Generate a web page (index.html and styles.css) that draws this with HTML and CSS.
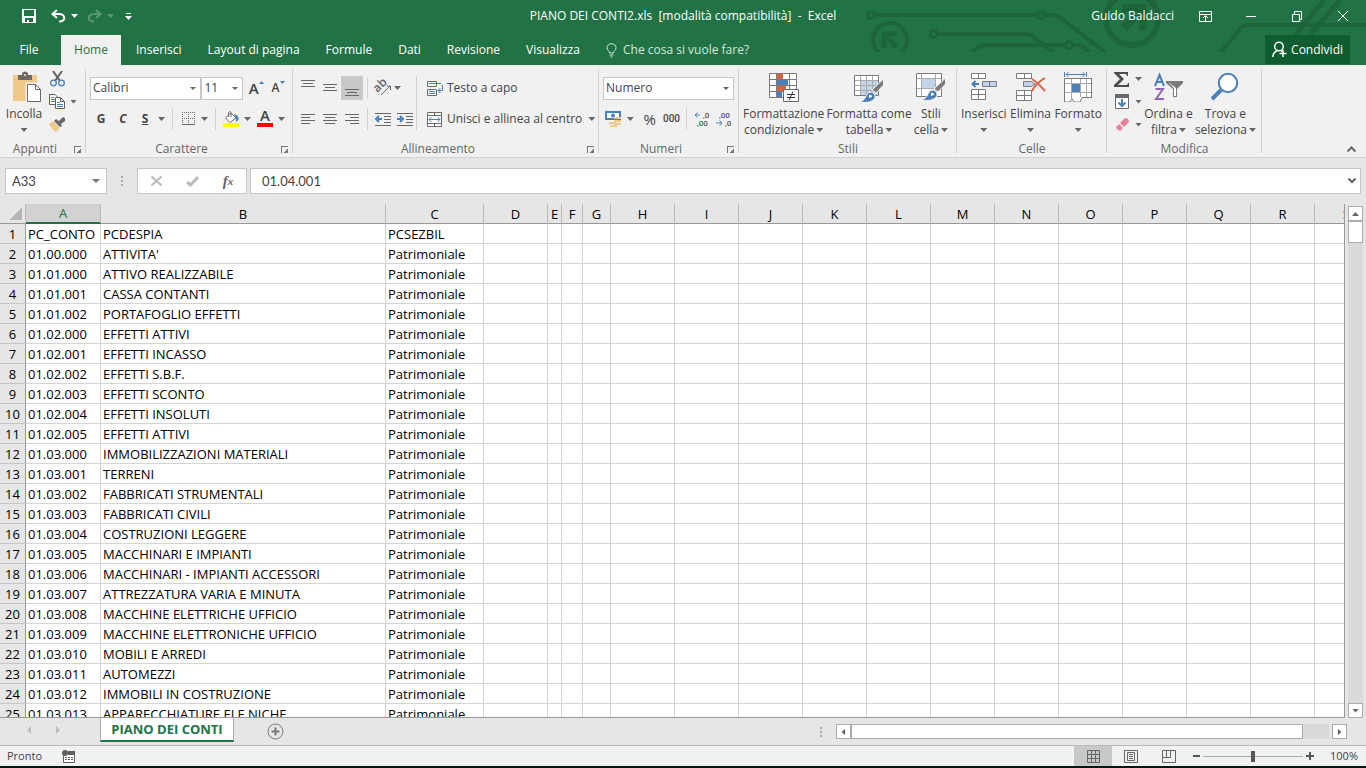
FILE: index.html
```
<!DOCTYPE html>
<html lang="it">
<head>
    <meta charset="UTF-8">
    <meta name="viewport" content="width=device-width, initial-scale=1.0">
    <title>PIANO DEI CONTI2.xls - Excel</title>
    <link rel="stylesheet" href="styles.css">
</head>
<body>
    <header class="header">
        <svg class="circuit" width="501" height="52" viewBox="0 0 501 52" fill="none" stroke="#1d643b" stroke-width="4">
            <circle cx="6" cy="15" r="3.5" stroke-width="3"/>
            <path d="M10 15H172M181 15H187Q192 15 196 18L241 53"/>
            <circle cx="176" cy="15" r="3.5" stroke-width="3"/>
            <circle cx="25" cy="40" r="17"/>
            <path d="M19 48V34H32M20 35L32 47" stroke-width="5"/>
            <circle cx="69" cy="34" r="3.5" stroke-width="3"/>
            <path d="M73 34H161Q164 34 167 36L189 53"/>
            <path d="M106 53L114 47Q117 45 121 45H200M208 45H212Q216 45 219 48L225 53"/>
            <circle cx="204" cy="45" r="3.5" stroke-width="3"/>
            <circle cx="267" cy="19" r="26" stroke-width="6"/>
            <path d="M257 8H278V30M277 9L259 28" stroke-width="8"/>
            <path d="M355 53L375 29Q378 25 383 25H501"/>
            <path d="M430 35L459 0M445 35L475 0" stroke-width="5"/>
        </svg>
        <div class="titlebar">
            <div class="quick">
                <button aria-label="Salva"><svg width="14" height="14" viewBox="0 0 14 14"><path fill="#fff" fill-rule="evenodd" d="M0 0H14V14H0ZM2 1V7H12V1ZM3 9V13H5V11H7V13H11V9Z"/></svg></button>
                <button aria-label="Annulla"><svg width="15" height="14" viewBox="0 0 15 14" fill="none" stroke="#fff" stroke-width="2"><path d="M6 1L1.500 5L6 9M2 5H8C15 5 15 13 8 12.500"/></svg></button>
                <i class="caret light"></i>
                <button class="dim redo" aria-label="Ripristina"><svg width="15" height="14" viewBox="0 0 15 14" fill="none" stroke="#fff" stroke-width="2"><path d="M9 1L13.500 5L9 9M13 5H7C0 5 0 13 7 12.500"/></svg></button>
                <i class="caret light dim"></i>
                <button class="customize" aria-label="Personalizza"><svg width="7" height="8" viewBox="0 0 7 8" fill="#fff"><path d="M1 1H6V2H1ZM0 4H7L3.500 8Z"/></svg></button>
            </div>
            <div class="title">PIANO DEI CONTI2.xls&nbsp; [modalità compatibilità]&nbsp; -&nbsp; Excel</div>
            <div class="window-buttons">
                <span class="user">Guido Baldacci</span>
                <button aria-label="Opzioni barra multifunzione"><svg width="13" height="11" viewBox="0 0 13 11" fill="none" stroke="#fff"><path d="M.5 .5H12.500V10.500H.5ZM.5 3.500H12.500M6.500 10V5M4 7L6.500 4.500L9 7"/></svg></button>
                <button aria-label="Riduci a icona"><svg width="10" height="11" viewBox="0 0 10 11" stroke="#fff"><path d="M0 5.500H10"/></svg></button>
                <button aria-label="Ripristina giù"><svg width="10" height="11" viewBox="0 0 10 11" fill="none" stroke="#fff"><path d="M.5 3.500H7.500V10.500H.5ZM2.500 3V.5H9.500V8.500H8"/></svg></button>
                <button aria-label="Chiudi"><svg width="10" height="10" viewBox="0 0 10 10" stroke="#fff"><path d="M0 0L10 10M10 0L0 10"/></svg></button>
            </div>
        </div>
        <nav class="tabs">
            <button class="file">File</button>
            <button class="active">Home</button>
            <button>Inserisci</button>
            <button>Layout di pagina</button>
            <button>Formule</button>
            <button>Dati</button>
            <button>Revisione</button>
            <button>Visualizza</button>
            <button class="tell"><svg width="11" height="15" viewBox="0 0 11 15" fill="none" stroke="#d5e5dc"><path d="M3.500 10C3.500 8 1 7 1 4.700A4.500 4 0 0 1 10 4.700C10 7 7.500 8 7.500 10ZM3.500 12H7.500M4.500 14H6.500"/></svg>Che cosa si vuole fare?</button>
            <button class="share"><svg width="15" height="17" viewBox="0 0 15 17" fill="none" stroke="#fff" stroke-width="1.500"><circle cx="7" cy="5.500" r="4.300"/><path d="M.8 16C1 12 3 10.500 5.500 9.500M8.500 9.500L10 10.500M11 9V16M7.500 12.500H14.500"/></svg>Condividi</button>
        </nav>
    </header>

    <div class="ribbon">
        <section class="group clipboard">
            <div class="group-body">
                <button class="big">
                    <svg width="34" height="32" viewBox="-6 0 34 32"><path fill="#efc987" d="M0 5H24V31H0Z"/><path fill="#6a6a6a" d="M5 5H9V3Q12 0 15 3V5H19V10H5Z"/><path fill="#efc987" d="M11 4H13V6H11Z"/><path fill="#fff" stroke="#f1f1f1" stroke-width="3" d="M14 14H23L28 19V32H14Z"/><path fill="#fff" stroke="#6a6a6a" d="M14.500 14.500H22.500L27.500 19.500V31.500H14.500ZM22.500 14.500V19.500H27.500"/></svg>
                    <span>Incolla</span><i class="caret"></i>
                </button>
                <div class="stack">
                    <div><button aria-label="Taglia"><svg width="15" height="16" viewBox="0 0 15 16" fill="none"><path stroke="#5f5f5f" stroke-width="2" d="M3 0L10 10M12 0L5 10"/><circle cx="3.500" cy="12" r="2.800" stroke="#4a80b8" stroke-width="1.300"/><circle cx="11.500" cy="12" r="2.800" stroke="#4a80b8" stroke-width="1.300"/></svg></button></div>
                    <div><button aria-label="Copia"><svg width="16" height="15" viewBox="0 0 16 15" fill="#fff" stroke="#5f5f5f"><path d="M.5 .5H6L8.500 3V10.500H.5Z"/><path stroke="#4a80b8" d="M2 3.500H5M2 5.500H6M2 7.500H6"/><path d="M6.500 3.500H11.500L15.500 7.500V14.500H6.500ZM11.500 3.500V7.500H15"/><path stroke="#4a80b8" d="M8 8.500H11M8 10.500H14M8 12.500H14"/></svg></button><i class="caret"></i></div>
                    <div><button aria-label="Copia formato"><svg width="17" height="15" viewBox="0 0 17 15"><path fill="#efc987" d="M0 7L4 4L11 11L7 15Q3 13 0 7Z"/><path fill="#6a6a6a" d="M5 4L7 2L10 4L14 0L16 1L16 4L12 7L13 9L11 10Z"/></svg></button></div>
                </div>
            </div>
            <div class="label">Appunti<button class="launch" aria-label="Appunti"></button></div>
        </section>

        <section class="group font">
            <div class="group-body rows">
                <div class="row">
                    <select class="combo face" aria-label="Tipo di carattere"><option>Calibri</option></select>
                    <select class="combo size" aria-label="Dimensione"><option>11</option></select>
                    <button class="w22 grow" aria-label="Aumenta dimensione">A<svg width="5" height="3" viewBox="0 0 5 3"><path fill="#4a80b8" d="M0 3L2.500 0L5 3Z"/></svg></button>
                    <button class="w22 grow less" aria-label="Riduci dimensione">A<svg width="5" height="3" viewBox="0 0 5 3"><path fill="#4a80b8" d="M0 0L2.500 3L5 0Z"/></svg></button>
                </div>
                <div class="row">
                    <button class="w22 style">G</button>
                    <button class="w22 style italic">C</button>
                    <button class="w22 style underline">S</button>
                    <i class="caret"></i>
                    <span class="sep"></span>
                    <button class="w22" aria-label="Bordi"><svg width="13" height="14" viewBox="0 0 13 14" fill="none" stroke="#6a6a6a"><path stroke-dasharray="1 1" d="M0 .5H13M.5 0V12M12.500 0V12M6.500 0V12M0 6.500H13"/><path d="M0 12.500H13"/></svg></button>
                    <i class="caret"></i>
                    <span class="sep"></span>
                    <button class="w22" aria-label="Colore riempimento"><svg width="16" height="16" viewBox="0 0 16 16"><path fill="#fff" stroke="#6a6a6a" d="M2.500 7L8 2L13 7L7 11.500Z"/><path fill="none" stroke="#6a6a6a" d="M5.500 6V1.500Q6.500 -.5 8 1.500V6"/><path fill="#4a80b8" d="M11 3Q16 4 15.500 9L13 11V7Z"/><path fill="#ff0" d="M0 12H16V16H0Z"/></svg></button>
                    <i class="caret"></i>
                    <button class="w22 color" aria-label="Colore carattere">A</button>
                    <i class="caret"></i>
                </div>
            </div>
            <div class="label">Carattere<button class="launch" aria-label="Carattere"></button></div>
        </section>

        <section class="group align">
            <div class="group-body">
                <div class="rows">
                    <div class="row">
                        <button class="w22" aria-label="Allinea in alto"><svg class="lines" width="14" height="22" viewBox="0 0 14 22"><path d="M0 3.500H14M2 6.500H12M0 9.500H14"/></svg></button>
                        <button class="w22" aria-label="Allinea al centro"><svg class="lines" width="14" height="22" viewBox="0 0 14 22"><path d="M0 7.500H14M2 10.500H12M0 13.500H14"/></svg></button>
                        <button class="w22 on" aria-label="Allinea in basso"><svg class="lines" width="14" height="22" viewBox="0 0 14 22"><path d="M0 12.500H14M2 15.500H12M0 18.500H14"/></svg></button>
                        <span class="sep"></span>
                        <button class="w22" aria-label="Orientamento"><svg class="ab" width="17" height="16" viewBox="0 0 17 16"><text x="0" y="9" transform="rotate(-45 6 8)">ab</text><path fill="none" stroke="#6a6a6a" d="M6 15L15 6M11.500 6H15.500V10"/></svg></button>
                        <i class="caret"></i>
                    </div>
                    <div class="row">
                        <button class="w22" aria-label="A sinistra"><svg class="lines" width="14" height="11" viewBox="0 0 14 11"><path d="M0 .5H14M0 3.500H9M0 6.500H14M0 9.500H9"/></svg></button>
                        <button class="w22" aria-label="Al centro"><svg class="lines" width="14" height="11" viewBox="0 0 14 11"><path d="M0 .5H14M2 3.500H12M0 6.500H14M2 9.500H12"/></svg></button>
                        <button class="w22" aria-label="A destra"><svg class="lines" width="14" height="11" viewBox="0 0 14 11"><path d="M0 .5H14M5 3.500H14M0 6.500H14M5 9.500H14"/></svg></button>
                        <span class="sep"></span>
                        <button class="w22" aria-label="Riduci rientro"><svg class="lines" width="16" height="13" viewBox="0 0 16 13"><path d="M0 .5H16M9 3.500H16M9 6.500H16M9 9.500H16M0 12.500H16"/><path class="blue" d="M7 6H3M4 3L1 6L4 9"/></svg></button>
                        <button class="w22" aria-label="Aumenta rientro"><svg class="lines" width="16" height="13" viewBox="0 0 16 13"><path d="M0 .5H16M9 3.500H16M9 6.500H16M9 9.500H16M0 12.500H16"/><path class="blue" d="M0 6H4M3 3L6 6L3 9"/></svg></button>
                    </div>
                </div>
                <span class="sep tall"></span>
                <div class="rows">
                    <button class="row text"><svg width="16" height="15" viewBox="0 0 16 15" fill="#fff" stroke="#6a6a6a"><path d="M.5 .5H9.500V5.500H.5ZM.5 8.500H9.500V14.500H.5Z"/><path fill="none" stroke="#4a80b8" d="M2 2.500H14M2 10.500H8M2 12.500H8M15.500 4V9.500H11M13.500 7L11 9.500L13.500 12"/></svg>Testo a capo</button>
                    <button class="row text"><svg width="16" height="15" viewBox="0 0 16 15" fill="#fff" stroke="#6a6a6a"><path d="M.5 .5H14.500V14.500H.5ZM.5 3.500H14.500M.5 11.500H14.500M7.500 .5V3.500M7.500 11.500V14.500"/><path fill="none" stroke="#4a80b8" d="M2 7.500H13M4.500 5L2 7.500L4.500 10M10.500 5L13 7.500L10.500 10"/></svg>Unisci e allinea al centro<i class="caret"></i></button>
                </div>
            </div>
            <div class="label">Allineamento<button class="launch" aria-label="Allineamento"></button></div>
        </section>

        <section class="group number">
            <div class="group-body rows">
                <div class="row">
                    <select class="combo format" aria-label="Formato numero"><option>Numero</option></select>
                </div>
                <div class="row">
                    <button class="w22" aria-label="Formato contabilità"><svg width="17" height="16" viewBox="0 0 17 16"><path fill="#fff" stroke="#4a80b8" stroke-width="2" d="M1 1H15V8H1Z"/><circle cx="8" cy="4.500" r="2" fill="#4a80b8"/><path fill="#efc987" d="M9 6H16V8H9ZM9 9H16V11H9ZM9 12H16V14H9ZM4 11H11V13H4ZM5 14H12V16H5Z"/></svg></button>
                    <i class="caret"></i>
                    <button class="w22 percent">%</button>
                    <button class="w22 thousand">000</button>
                    <span class="sep"></span>
                    <button class="w22" aria-label="Aumenta decimali"><svg class="decimals" width="16" height="16" viewBox="0 0 16 16"><text x="9" y="7">,0</text><text x="3" y="15">,00</text><path d="M1 4H6M3.500 1.500L1 4L3.500 6.500"/></svg></button>
                    <button class="w22" aria-label="Diminuisci decimali"><svg class="decimals" width="16" height="16" viewBox="0 0 16 16"><text x="3" y="7">,00</text><text x="9" y="15">,0</text><path d="M0 12H6M3.500 9.500L6 12L3.500 14.500"/></svg></button>
                </div>
            </div>
            <div class="label">Numeri<button class="launch" aria-label="Numeri"></button></div>
        </section>

        <section class="group styles">
            <div class="group-body">
                <button class="big">
                    <svg width="30" height="32" viewBox="0 0 30 32"><path fill="#fff" stroke="#7a7a7a" d="M.5 3.500H27.500V27.500H.5ZM7.500 3V27M20.500 3V27M.5 9.500H27M.5 15.500H27M.5 21.500H27"/><path fill="#d9623f" d="M8 4H14V9H8ZM8 16H17V21H8Z"/><path fill="#4a80b8" d="M8 10H19V15H8ZM8 22H13V27H8Z"/><path fill="#fff" stroke="#6a6a6a" d="M14.500 19.500H29.500V31.500H14.500Z"/><path stroke="#333" fill="none" d="M18 24.500H26M18 27.500H26M24 21.500L20 30"/></svg>
                    <span>Formattazione</span><span>condizionale<i class="caret"></i></span>
                </button>
                <button class="big">
                    <svg width="30" height="32" viewBox="0 0 30 32"><path fill="#fff" d="M.5 5.500H24.500V25.500H.5Z"/><path fill="#c2d4ea" d="M7 11H25V26H7Z"/><path fill="none" stroke="#7a7a7a" d="M.5 5.500H24.500V25.500H.5Z"/><path stroke="#aaa" d="M6.500 6V25M12.500 6V25M18.500 6V25M1 10.500H24M1 15.500H24M1 20.500H24"/><path fill="#7a7a7a" stroke="#f1f1f1" d="M29.500 9V15L22 23L18 20Z"/><path fill="#4a80b8" stroke="#f1f1f1" d="M18 22Q22 24 21 28Q17 34 6 32Q11 30 12 26Q14 21 18 22Z"/><path fill="#fff" d="M15 25Q18 24 18 27L15 28Z"/></svg>
                    <span>Formatta come</span><span>tabella<i class="caret"></i></span>
                </button>
                <button class="big">
                    <svg width="30" height="32" viewBox="0 0 30 32"><path fill="#fff" stroke="#7a7a7a" d="M.5 3.500H25.500V26.500H.5Z"/><path fill="#c2d4ea" stroke="#aaa" d="M5.500 8.500H19.500V18.500H5.500Z"/><path fill="none" stroke="#aaa" d="M5.500 4V26M19.500 4V26M1 8.500H25M1 18.500H25"/><path fill="#7a7a7a" stroke="#f1f1f1" d="M29.500 8V14L22 22L18 19Z"/><path fill="#4a80b8" stroke="#f1f1f1" d="M18 20Q22 22 21 26Q17 32 6 30Q11 28 12 24Q14 19 18 20Z"/><path fill="#fff" d="M15 23Q18 22 18 25L15 26Z"/></svg>
                    <span>Stili</span><span>cella<i class="caret"></i></span>
                </button>
            </div>
            <div class="label">Stili</div>
        </section>

        <section class="group cells">
            <div class="group-body">
                <button class="big">
                    <svg width="28" height="32" viewBox="0 0 28 32" fill="#fff" stroke="#7a7a7a"><path d="M1.500 3.500H15.500V8.500H1.500ZM8.500 3V8M1.500 19.500H15.500V29.500H1.500ZM8.500 19V29M1 24.500H15"/><path fill="#c2d4ea" d="M12.500 11.500H26.500V16.500H12.500ZM19.500 11V16"/><path fill="none" stroke="#4a80b8" stroke-width="2" d="M9 14H3M5.500 11L2.500 14L5.500 17"/></svg>
                    <span>Inserisci</span><i class="caret"></i>
                </button>
                <button class="big">
                    <svg width="30" height="32" viewBox="0 0 30 32" fill="#fff" stroke="#7a7a7a"><path d="M.5 3.500H15.500V8.500H.5ZM8.500 3V8M.5 20.500H15.500V30.500H.5ZM8.500 20V30M1 25.500H15"/><path fill="#c2d4ea" d="M7.500 11.500H15.500L19 14L15.500 16.500H7.500Z"/><path fill="none" stroke="#d9623f" stroke-width="2" d="M16 9Q22 13 29 21M29 8Q20 13 16 21"/></svg>
                    <span>Elimina</span><i class="caret"></i>
                </button>
                <button class="big">
                    <svg width="28" height="32" viewBox="0 0 28 32" fill="#fff" stroke="#7a7a7a"><path d="M.5 8.500H27.500V27.500H18L16 32H10L8 28.500L6 32H.5Z"/><path stroke="#aaa" fill="none" d="M7.500 9V28M16.500 9V27M22.500 9V27M1 13.500H27M1 22.500H27"/><path stroke="none" fill="#4a80b8" d="M8 14H16V22H8Z"/><path fill="none" stroke="#4a80b8" d="M.5 2V7M22.500 2V7M2 4.500H21M4.500 2L2 4.500L4.500 7M18.500 2L21 4.500L18.500 7"/></svg>
                    <span>Formato</span><i class="caret"></i>
                </button>
            </div>
            <div class="label">Celle</div>
        </section>

        <section class="group edit">
            <div class="group-body">
                <div class="stack">
                    <div><button aria-label="Somma"><svg width="16" height="15" viewBox="0 0 16 15"><path fill="#4d4d4d" d="M0 0H14V4H13Q13 2 11 2H5L10 7L4 13H12Q14 13 14 11H15V15H0V13L6 7L0 1Z"/></svg></button><i class="caret"></i></div>
                    <div><button aria-label="Riempimento"><svg width="14" height="15" viewBox="0 0 14 15"><path fill="#fff" stroke="#6a6a6a" d="M.5 .5H13.500V14.500H.5Z"/><path fill="#6a6a6a" d="M0 0H14V4H0Z"/><path fill="none" stroke="#4a80b8" stroke-width="2" d="M7 5V12M3.500 8.500L7 12L10.500 8.500"/></svg></button><i class="caret"></i></div>
                    <div><button aria-label="Cancella"><svg width="13" height="13" viewBox="0 0 13 13" fill="#e8839a"><path d="M4 5L9 0Q13 0 13 4L8 9Z"/><path d="M3 6L7 10L4 13Q0 11 0 9Z"/></svg></button><i class="caret"></i></div>
                </div>
                <button class="big">
                    <svg width="29" height="32" viewBox="0 0 29 32"><path fill="none" stroke="#4a80b8" stroke-width="2" d="M1 16L5.500 5L10 16M3 12H8"/><path fill="none" stroke="#9463b5" stroke-width="2" d="M1.500 19H9L2 29H10"/><path fill="#7a7a7a" d="M12 11H29V13L23 19V27H19V19L12 13Z"/><path fill="#fff" d="M14 12L20 18V26H22V18Z"/></svg>
                    <span>Ordina e</span><span>filtra<i class="caret"></i></span>
                </button>
                <button class="big">
                    <svg width="28" height="32" viewBox="0 0 28 32"><path stroke="#4a80b8" stroke-width="4" d="M1 29L10 20"/><circle cx="17" cy="13" r="9.200" fill="#fff" stroke="#4a80b8" stroke-width="2"/></svg>
                    <span>Trova e</span><span>seleziona<i class="caret"></i></span>
                </button>
            </div>
            <div class="label">Modifica</div>
        </section>
        <button class="collapse" aria-label="Comprimi"><svg width="9" height="6" viewBox="0 0 9 6" fill="none" stroke="#6a6a6a" stroke-width="2"><path d="M.5 5.500L4.500 1.500L8.500 5.500"/></svg></button>
    </div>

    <div class="formula-bar">
        <select class="name-box" aria-label="Casella nome"><option>A33</option></select>
        <span class="dots"><i></i><i></i><i></i></span>
        <div class="formula-buttons">
            <button aria-label="Annulla"><svg width="11" height="10" viewBox="0 0 11 10" stroke="#bdbdbd" stroke-width="2"><path d="M.5 .5L10.500 9.500M10.500 .5L.5 9.500"/></svg></button>
            <button aria-label="Invio"><svg width="13" height="11" viewBox="0 0 13 11" fill="none" stroke="#bdbdbd" stroke-width="3"><path d="M1 6L4.500 9L12 1"/></svg></button>
            <button class="fx" aria-label="Inserisci funzione">f<sub>x</sub></button>
        </div>
        <div class="formula">
            <input type="text" value="01.04.001" aria-label="Barra della formula">
            <button aria-label="Espandi"><svg width="8" height="6" viewBox="0 0 8 6" fill="none" stroke="#666" stroke-width="2"><path d="M.5 .5L4 4L7.500 .5"/></svg></button>
        </div>
    </div>

    <main class="workspace">
        <div class="sheet">
            <table>
                <colgroup id="cols"></colgroup>
                <thead><tr id="letters"></tr></thead>
                <tbody id="cells"></tbody>
            </table>
        </div>
        <div class="vscroll">
            <button class="up" aria-label="Su"></button>
            <div class="thumb"></div>
            <div class="track"></div>
            <button class="down" aria-label="Giù"></button>
        </div>
    </main>

    <div class="sheet-tabs">
        <div class="sheet-nav">
            <button aria-label="Foglio precedente"><svg width="4" height="8" viewBox="0 0 4 8" fill="#bcbcbc"><path d="M4 0V8L0 4Z"/></svg></button>
            <button aria-label="Foglio successivo"><svg width="4" height="8" viewBox="0 0 4 8" fill="#bcbcbc"><path d="M0 0V8L4 4Z"/></svg></button>
        </div>
        <button class="sheet-tab">PIANO DEI CONTI</button>
        <button class="add" aria-label="Nuovo foglio"><svg width="17" height="17" viewBox="0 0 17 17" fill="none" stroke="#777"><circle cx="8.500" cy="8.500" r="7.500"/><path stroke-width="2" d="M8.500 4.500V12.500M4.500 8.500H12.500"/></svg></button>
        <div class="hscroll">
            <span class="dots"><i></i><i></i><i></i></span>
            <button class="left" aria-label="Sinistra"></button>
            <div class="thumb"></div>
            <div class="track"></div>
            <button class="right" aria-label="Destra"></button>
        </div>
    </div>

    <footer class="status">
        <span class="ready">Pronto</span>
        <button class="macro" aria-label="Registra macro"><svg width="13" height="13" viewBox="0 0 13 13" fill="#5f5f5f"><path fill="#fff" stroke="#5f5f5f" d="M1.500 3.500H12.500V12.500H1.500Z"/><circle cx="3" cy="3" r="3"/><path d="M6 1H13V5H6ZM3 7H5V8H3ZM6 7H8V8H6ZM9 7H11V8H9ZM3 9H5V10H3ZM6 9H8V10H6ZM9 9H11V10H9Z"/></svg></button>
        <div class="views">
            <button class="on" aria-label="Normale"><svg width="13" height="13" viewBox="0 0 13 13" fill="none" stroke="#666"><path d="M.5 .5H12.500V12.500H.5ZM4.500 0V13M8.500 0V13M0 4.500H13M0 8.500H13"/></svg></button>
            <button aria-label="Layout di pagina"><svg width="14" height="13" viewBox="0 0 14 13" fill="none" stroke="#666"><path d="M.5 .5H13.500V12.500H.5ZM3.500 2.500H10.500V10.500H3.500ZM5 4.500H9M5 6.500H9M5 8.500H9"/></svg></button>
            <button aria-label="Anteprima interruzioni"><svg width="14" height="13" viewBox="0 0 14 13" fill="none" stroke="#666"><path d="M.5 .5H13.500V12.500H.5ZM4.500 0V7.500M8.500 0V7.500H0"/></svg></button>
        </div>
        <button class="zoom-step" aria-label="Zoom indietro"><svg width="7" height="8" viewBox="0 0 7 8" stroke="#555" stroke-width="2"><path d="M0 4H7"/></svg></button>
        <input class="zoom" type="range" min="0" max="200" value="100" aria-label="Zoom">
        <button class="zoom-step" aria-label="Zoom avanti"><svg width="8" height="8" viewBox="0 0 8 8" stroke="#555" stroke-width="2"><path d="M0 4H8M4 0V8"/></svg></button>
        <span class="zoom-value">100%</span>
    </footer>

<script>
// Column letters and widths
const columns = [
    ['A', 75], ['B', 285], ['C', 98], ['D', 64], ['E', 14], ['F', 21], ['G', 28],
    ['H', 64], ['I', 64], ['J', 64], ['K', 64], ['L', 64], ['M', 64], ['N', 64],
    ['O', 64], ['P', 64], ['Q', 64], ['R', 64], ['S', 64]
];

const rows = [
    ['PC_CONTO', 'PCDESPIA', 'PCSEZBIL'],
    ['01.00.000', "ATTIVITA'"],
    ['01.01.000', 'ATTIVO REALIZZABILE'],
    ['01.01.001', 'CASSA CONTANTI'],
    ['01.01.002', 'PORTAFOGLIO EFFETTI'],
    ['01.02.000', 'EFFETTI ATTIVI'],
    ['01.02.001', 'EFFETTI INCASSO'],
    ['01.02.002', 'EFFETTI S.B.F.'],
    ['01.02.003', 'EFFETTI SCONTO'],
    ['01.02.004', 'EFFETTI INSOLUTI'],
    ['01.02.005', 'EFFETTI ATTIVI'],
    ['01.03.000', 'IMMOBILIZZAZIONI MATERIALI'],
    ['01.03.001', 'TERRENI'],
    ['01.03.002', 'FABBRICATI STRUMENTALI'],
    ['01.03.003', 'FABBRICATI CIVILI'],
    ['01.03.004', 'COSTRUZIONI LEGGERE'],
    ['01.03.005', 'MACCHINARI E IMPIANTI'],
    ['01.03.006', 'MACCHINARI - IMPIANTI ACCESSORI'],
    ['01.03.007', 'ATTREZZATURA VARIA E MINUTA'],
    ['01.03.008', 'MACCHINE ELETTRICHE UFFICIO'],
    ['01.03.009', 'MACCHINE ELETTRONICHE UFFICIO'],
    ['01.03.010', 'MOBILI E ARREDI'],
    ['01.03.011', 'AUTOMEZZI'],
    ['01.03.012', 'IMMOBILI IN COSTRUZIONE'],
    ['01.03.013', 'APPARECCHIATURE ELE.NICHE']
];

const cols = document.getElementById('cols');
const letters = document.getElementById('letters');
const cells = document.getElementById('cells');

cols.innerHTML = '<col class="row-head">' +
    columns.map(c => `<col style="width: ${c[1]}px">`).join('');

letters.innerHTML = '<th class="corner"></th>' +
    columns.map(c => `<th class="${c[0] === 'A' ? 'selected' : ''}">${c[0]}</th>`).join('');

rows.forEach((row, i) => {
    const tr = document.createElement('tr');
    const values = [row[0], row[1], row[2] || 'Patrimoniale'];
    tr.innerHTML = `<th>${i + 1}</th>` +
        columns.map((c, n) => `<td>${values[n] || ''}</td>`).join('');
    cells.appendChild(tr);
});
</script>
</body>
</html>
```
FILE: styles.css
```
* {
    box-sizing: border-box;
}
body {
    margin: 0;
    height: 100vh;
    display: flex;
    flex-direction: column;
    overflow: hidden;
    font-family: "Open Sans", "Noto Sans", sans-serif;
    font-size: 12px;
    line-height: 16px;
    color: #444;
    background: #e6e6e6;
    border-bottom: 2px solid #0a1410;
}
button {
    font: inherit;
    color: inherit;
    background: none;
    border: none;
    padding: 0;
    display: flex;
    align-items: center;
    justify-content: center;
    white-space: nowrap;
}
select, input {
    font: inherit;
    color: inherit;
    border-radius: 0;
    margin: 0;
}
svg {
    flex: none;
    display: block;
}
.caret {
    flex: none;
    width: 7px;
    height: 4px;
    background: #666;
    clip-path: polygon(0 0, 100% 0, 50% 100%);
}
.caret.light {
    background: #fff;
}
.dim, .caret.dim {
    opacity: 0.25;
}

/* Title bar and tabs */
.header {
    position: relative;
    flex: none;
    background: #217346;
    color: #fff;
}
.circuit {
    position: absolute;
    top: 0;
    right: 0;
}
.titlebar {
    position: relative;
    display: grid;
    grid-template-columns: 1fr auto 1fr;
    align-items: center;
    height: 35px;
    padding-bottom: 3px;
}
.quick {
    display: flex;
    align-items: center;
    gap: 5px;
    padding-left: 22px;
}
.quick button:first-child {
    margin-right: 10px;
}
.redo {
    margin-left: 4px;
}
.customize {
    margin-left: 6px;
}
.window-buttons {
    display: flex;
    align-items: center;
    justify-content: flex-end;
}
.window-buttons button {
    width: 46px;
    height: 30px;
}
.user {
    margin-right: 8px;
}
.tabs {
    position: relative;
    display: flex;
    height: 30px;
}
.tabs button {
    padding: 0 13px;
}
.tabs .file {
    width: 61px;
    padding: 0 3px 0 0;
}
.tabs .active {
    width: 60px;
    padding: 0;
    margin-right: 2px;
    background: #f1f1f1;
    color: #217346;
}
.tabs .tell {
    gap: 6px;
    color: #d5e5dc;
}
.tabs .share {
    margin-left: auto;
    margin-right: 16px;
    height: 29px;
    padding: 0 7px;
    gap: 4px;
    background: #0e5c2f;
}

/* Ribbon */
.ribbon {
    flex: none;
    display: flex;
    height: 93px;
    background: #f1f1f1;
    border-bottom: 1px solid #d2d2d2;
}
.group {
    flex: none;
    display: flex;
    flex-direction: column;
    background: linear-gradient(#d2d2d2, #d2d2d2) right 4px / 1px 84px no-repeat;
}
.clipboard { width: 86px; }
.font { width: 207px; }
.align { width: 306px; }
.number { width: 140px; }
.styles { width: 218px; }
.cells { width: 150px; }
.edit { width: 155px; }
.group-body {
    flex: 1;
    display: flex;
    padding: 5px 4px 0 4px;
}
.label {
    position: relative;
    height: 16px;
    text-align: center;
    color: #666;
    padding-right: 16px;
}
.styles .label, .cells .label, .edit .label {
    padding-right: 0;
}
.launch {
    position: absolute;
    right: 5px;
    top: 5px;
    width: 7px;
    height: 7px;
    border-top: 1px solid #777;
    border-left: 1px solid #777;
    background: linear-gradient(135deg, transparent 60%, #777 60%);
}
.big {
    display: flex;
    flex-direction: column;
    justify-content: flex-start;
    height: 68px;
}
.big svg {
    margin-bottom: 4px;
}
.big span {
    display: flex;
    align-items: center;
    gap: 2px;
}
.big > .caret {
    margin-top: 6px;
}
.clipboard .big {
    width: 40px;
}
.clipboard .group-body {
    gap: 4px;
}
.stack > div {
    display: flex;
    align-items: center;
    height: 23px;
    gap: 4px;
}
.stack > div:first-child {
    height: 18px;
    margin-bottom: 2px;
}
.stack button {
    width: 18px;
}
.rows {
    display: flex;
    flex-direction: column;
    gap: 7px;
}
.group-body.rows {
    padding-top: 11px;
}
.align .rows {
    padding-top: 6px;
}
.row {
    display: flex;
    align-items: center;
    height: 24px;
}
.w22 {
    width: 22px;
    height: 24px;
}
.on {
    background: #c8c8c8;
}
.sep {
    flex: none;
    width: 1px;
    height: 22px;
    margin: 0 4px;
    background: #d2d2d2;
}
.sep.tall {
    height: 54px;
    margin: 6px 7px 0 0;
}
.combo {
    appearance: none;
    height: 23px;
    padding: 0 2px;
    border: 1px solid #c6c6c6;
    background: #fff url("data:image/svg+xml,%3Csvg xmlns='http://www.w3.org/2000/svg' width='6' height='3'%3E%3Cpath fill='%23666' d='M0 0H6L3 3Z'/%3E%3C/svg%3E") right 4px center no-repeat;
}
.face {
    width: 112px;
}
.size {
    width: 42px;
    margin-right: 2px;
}
.format {
    width: 131px;
}
.grow {
    font-size: 15px;
    font-weight: 600;
}
.less {
    font-size: 12px;
}
.grow svg {
    margin-bottom: 12px;
}
.style {
    font-weight: 700;
}
.italic {
    font-style: italic;
}
.underline {
    text-decoration: underline;
}
.font .caret {
    margin: 0 3px 0 2px;
}
.color {
    font-size: 15px;
    font-weight: 600;
    background: linear-gradient(#f00, #f00) center bottom 4px / 16px 4px no-repeat;
    align-items: flex-start;
}
.align .group-body > .rows:first-child {
    width: 123px;
}
.lines {
    fill: none;
    stroke: #666;
}
.lines .blue {
    stroke: #4a80b8;
    stroke-width: 2;
}
.ab {
    overflow: visible;
    font-size: 12px;
    font-weight: 600;
    fill: #666;
}
.text {
    gap: 4px;
    justify-content: flex-start;
}
.align .text {
    padding: 0 3px;
}
.text .caret {
    margin-left: 2px;
}
.percent {
    font-size: 15px;
}
.thousand {
    font-family: Roboto, sans-serif;
    font-size: 10px;
    font-weight: 500;
}
.number .caret {
    margin: 0 5px 0 2px;
}
.decimals {
    overflow: visible;
    font-family: Roboto, sans-serif;
    font-size: 8px;
    font-weight: 500;
    fill: #555;
}
.decimals path {
    fill: none;
    stroke: #4a80b8;
}
.styles .group-body {
    justify-content: space-between;
    padding-right: 9px;
}
.cells .group-body {
    justify-content: space-between;
    padding: 5px 5px 0 4px;
}
.edit .group-body {
    justify-content: space-between;
    padding-right: 6px;
    padding-left: 6px;
}
.collapse {
    align-self: flex-end;
    margin: 0 10px 5px auto;
}

/* Formula bar */
.formula-bar {
    flex: none;
    display: flex;
    height: 46px;
    padding: 10px 5px;
    font-family: Lato, sans-serif;
    font-size: 13px;
}
.name-box, .formula-buttons, .formula {
    height: 26px;
    border: 1px solid #c6c6c6;
    background: #fff;
}
.name-box {
    appearance: none;
    width: 102px;
    padding: 0 6px;
    background: #fff url("data:image/svg+xml,%3Csvg xmlns='http://www.w3.org/2000/svg' width='8' height='4'%3E%3Cpath fill='%23777' d='M0 0H8L4 4Z'/%3E%3C/svg%3E") right 6px center no-repeat;
}
.dots {
    display: flex;
    flex-direction: column;
    justify-content: center;
    gap: 2px;
    width: 30px;
    align-items: center;
}
.dots i {
    width: 2px;
    height: 2px;
    background: #aaa;
}
.formula-buttons {
    display: flex;
    width: 110px;
    margin-right: 3px;
}
.formula-buttons button {
    flex: 1;
}
.fx {
    font-family: "Liberation Serif", serif;
    font-size: 15px;
    font-style: italic;
    font-weight: 700;
    color: #666;
}
.fx sub {
    font-size: 11px;
}
.formula {
    flex: 1;
    display: flex;
}
.formula input {
    flex: 1;
    border: none;
    padding: 0 11px;
    background: none;
}
.formula button {
    width: 16px;
}

/* Sheet */
.workspace {
    flex: 1;
    display: flex;
    min-height: 0;
}
.sheet {
    flex: 1;
    min-width: 0;
    overflow: hidden;
    border-right: 1px solid #999;
    border-bottom: 1px solid #999;
    background: #fff;
    font-size: 13px;
    color: #000;
}
table {
    table-layout: fixed;
    width: 1379px;
    border-collapse: separate;
    border-spacing: 0;
}
.row-head {
    width: 26px;
}
th, td {
    height: 20px;
    padding: 0 2px;
    line-height: 18px;
    white-space: nowrap;
    border-right: 1px solid #d4d4d4;
    border-bottom: 1px solid #d4d4d4;
    text-align: left;
}
th {
    padding: 0;
    font-weight: 400;
    text-align: center;
    background: #e6e6e6;
}
thead th {
    border-right-color: #bbb;
    border-bottom-color: #999;
}
tbody th {
    border-right-color: #999;
    border-bottom-color: #c6c6c6;
}
thead .selected {
    background: #d2d2d2;
    color: #217346;
    border-bottom: 2px solid #217346;
    line-height: 17px;
}
thead .corner {
    background: linear-gradient(135deg, transparent 50%, #b5b5b5 50%) 10px 4px / 12px 12px no-repeat #e6e6e6;
}
.vscroll {
    display: flex;
    flex-direction: column;
    width: 21px;
    padding: 2px 3px 0 3px;
}
.up, .down, .left, .right {
    flex: none;
    width: 15px;
    height: 15px;
    border: 1px solid #ababab;
    background: #fff;
}
.up::before, .down::before, .left::before, .right::before {
    content: "";
    flex: none;
    width: 7px;
    height: 4px;
    background: #666;
    clip-path: polygon(0 0, 100% 0, 50% 100%);
}
.up::before {
    transform: rotate(180deg);
}
.left::before {
    transform: rotate(90deg);
}
.right::before {
    transform: rotate(-90deg);
}
.thumb {
    border: 1px solid #ababab;
    background: #fff;
}
.track {
    flex: 1;
    background: #dadada;
}
.vscroll .thumb {
    height: 22px;
}

/* Sheet tabs */
.sheet-tabs {
    flex: none;
    display: flex;
    height: 27px;
}
.sheet-nav {
    display: flex;
    width: 100px;
    padding: 0 40px 3px 27px;
    justify-content: space-between;
}
.sheet-tab {
    width: 134px;
    height: 24px;
    font-size: 13px;
    font-weight: 700;
    color: #217346;
    background: #fff;
    border: 1px solid #ababab;
    border-top: none;
    border-bottom: 2px solid #217346;
}
.add {
    margin-left: 33px;
}
.hscroll {
    flex: 1;
    display: flex;
    align-items: center;
    margin-left: auto;
    max-width: 561px;
    padding-right: 19px;
}
.hscroll .dots {
    width: 31px;
}
.hscroll .thumb {
    flex: 1;
    height: 15px;
}
.hscroll .track {
    flex: 0 0 26px;
    height: 15px;
    margin-right: 3px;
}

/* Status bar */
.status {
    flex: none;
    display: flex;
    align-items: center;
    height: 21px;
    padding: 0 8px 0 7px;
    background: #f1f1f1;
    border-top: 1px solid #bbb;
    font-size: 11px;
}
.macro {
    margin-left: 20px;
}
.views {
    display: flex;
    margin-left: auto;
    margin-right: 2px;
}
.views button {
    width: 38px;
    height: 20px;
}
.zoom-step {
    margin: 0 3px;
}
.zoom {
    appearance: none;
    width: 100px;
    height: 11px;
    background: linear-gradient(#aaa, #aaa) center / 100% 1px no-repeat;
}
.zoom::-webkit-slider-thumb {
    appearance: none;
    width: 4px;
    height: 11px;
    background: #555;
}
.zoom-value {
    width: 41px;
    text-align: right;
}
```
